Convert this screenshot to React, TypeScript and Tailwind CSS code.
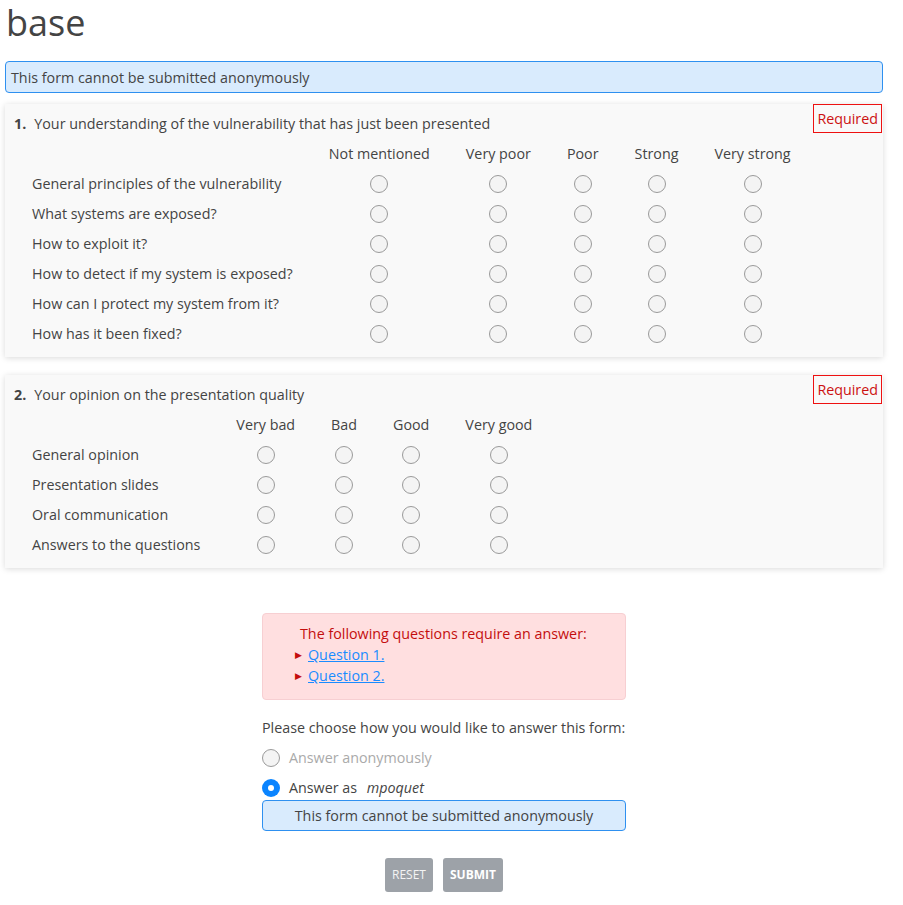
const q1Cols = ["Not mentioned", "Very poor", "Poor", "Strong", "Very strong"];
const q1Rows = [
  "General principles of the vulnerability",
  "What systems are exposed?",
  "How to exploit it?",
  "How to detect if my system is exposed?",
  "How can I protect my system from it?",
  "How has it been fixed?",
];
const q2Cols = ["Very bad", "Bad", "Good", "Very good"];
const q2Rows = ["General opinion", "Presentation slides", "Oral communication", "Answers to the questions"];

function Radio({ checked = false }: { checked?: boolean }) {
  if (checked) {
    return (
      <span className="flex w-[18px] h-[18px] rounded-full bg-[#0a84ff] items-center justify-center">
        <span className="w-[6px] h-[6px] rounded-full bg-white"></span>
      </span>
    );
  }
  return <span className="block w-[18px] h-[18px] rounded-full border border-[#9a9a9a] bg-[#f4f4f4]"></span>;
}

function Question({ num, title, cols, rows }: { num: string; title: string; cols: string[]; rows: string[] }) {
  return (
    <div className="relative bg-[#f9f9f9] shadow-[0_1px_6px_rgba(0,0,0,0.15)] pl-[9px] pt-[10px] pb-[8px]">
      <div className="absolute right-[1px] top-0 h-[29px] px-[3px] border border-[#ee1111] text-[#cc1111] leading-[27px]">
        Required
      </div>
      <div className="h-[20px] leading-[20px]">
        <span className="font-bold">{num}</span>
        <span className="ml-[8px]">{title}</span>
      </div>
      <table className="mt-[5px] ml-[18px] border-collapse">
        <thead>
          <tr className="h-[30px]">
            <th className="pr-[18px]"></th>
            {cols.map((c) => (
              <th key={c} className="px-[18px] font-normal text-center whitespace-nowrap">
                {c}
              </th>
            ))}
          </tr>
        </thead>
        <tbody>
          {rows.map((r) => (
            <tr key={r} className="h-[30px]">
              <td className="pr-[18px] whitespace-nowrap">{r}</td>
              {cols.map((c) => (
                <td key={c} className="px-[18px]">
                  <div className="flex justify-center">
                    <Radio />
                  </div>
                </td>
              ))}
            </tr>
          ))}
        </tbody>
      </table>
    </div>
  );
}

export default function App() {
  return (
    <div className="min-h-screen bg-white text-[#444] text-[14.3px] leading-[20px] pl-[5px] pr-[20px]" style={{ fontFamily: '"Open Sans", sans-serif' }}>
      {/* title */}
      <h1 className="text-[36px] leading-[46px] pl-[1px] font-normal">base</h1>

      {/* notice */}
      <div className="mt-[15px] h-[32px] rounded-[4px] border border-[#2e90f0] bg-[#d9ebfd] px-[5px] leading-[31px]">
        This form cannot be submitted anonymously
      </div>

      <div className="mt-[11px] flex flex-col gap-[18px]">
        <Question num="1." title="Your understanding of the vulnerability that has just been presented" cols={q1Cols} rows={q1Rows} />
        <Question num="2." title="Your opinion on the presentation quality" cols={q2Cols} rows={q2Rows} />
      </div>

      {/* submit area */}
      <div className="w-[364px] mx-auto mt-[45px]">
        <div className="rounded-[4px] border border-[#f7cfd2] bg-[#ffdfe0] pt-[9px] pb-[13px] pl-[32px]">
          <div className="text-[#c40e0e] pl-[5px] leading-[21px]">The following questions require an answer:</div>
          <ul>
            <li className="flex items-center leading-[21px]">
              <span className="text-[#c40e0e] text-[9px] mr-[6px]">▶</span>
              <a href="#q1" className="text-[#1a8cff] underline">Question 1.</a>
            </li>
            <li className="flex items-center leading-[21px]">
              <span className="text-[#c40e0e] text-[9px] mr-[6px]">▶</span>
              <a href="#q2" className="text-[#1a8cff] underline">Question 2.</a>
            </li>
          </ul>
        </div>

        <div className="mt-[18px]">Please choose how you would like to answer this form:</div>
        <div className="mt-[10px] flex items-center gap-[9px] text-[#aaa]">
          <Radio />
          <span>Answer anonymously</span>
        </div>
        <div className="mt-[10px] flex items-center gap-[9px]">
          <Radio checked />
          <span>
            Answer as <i className="ml-[6px]">mpoquet</i>
          </span>
        </div>
        <div className="mt-[2px] h-[31px] rounded-[4px] border border-[#2e90f0] bg-[#d9ebfd] text-center leading-[29px]">
          This form cannot be submitted anonymously
        </div>

        <div className="mt-[27px] flex justify-center gap-[10px] pb-[14px]">
          <button className="h-[34px] px-[7px] rounded-[3px] bg-[#9da2a8] text-[#f4f4f4] text-[12px] uppercase">Reset</button>
          <button className="h-[34px] px-[7px] rounded-[3px] bg-[#9da2a8] text-white text-[12px] font-bold uppercase">Submit</button>
        </div>
      </div>
    </div>
  );
}
